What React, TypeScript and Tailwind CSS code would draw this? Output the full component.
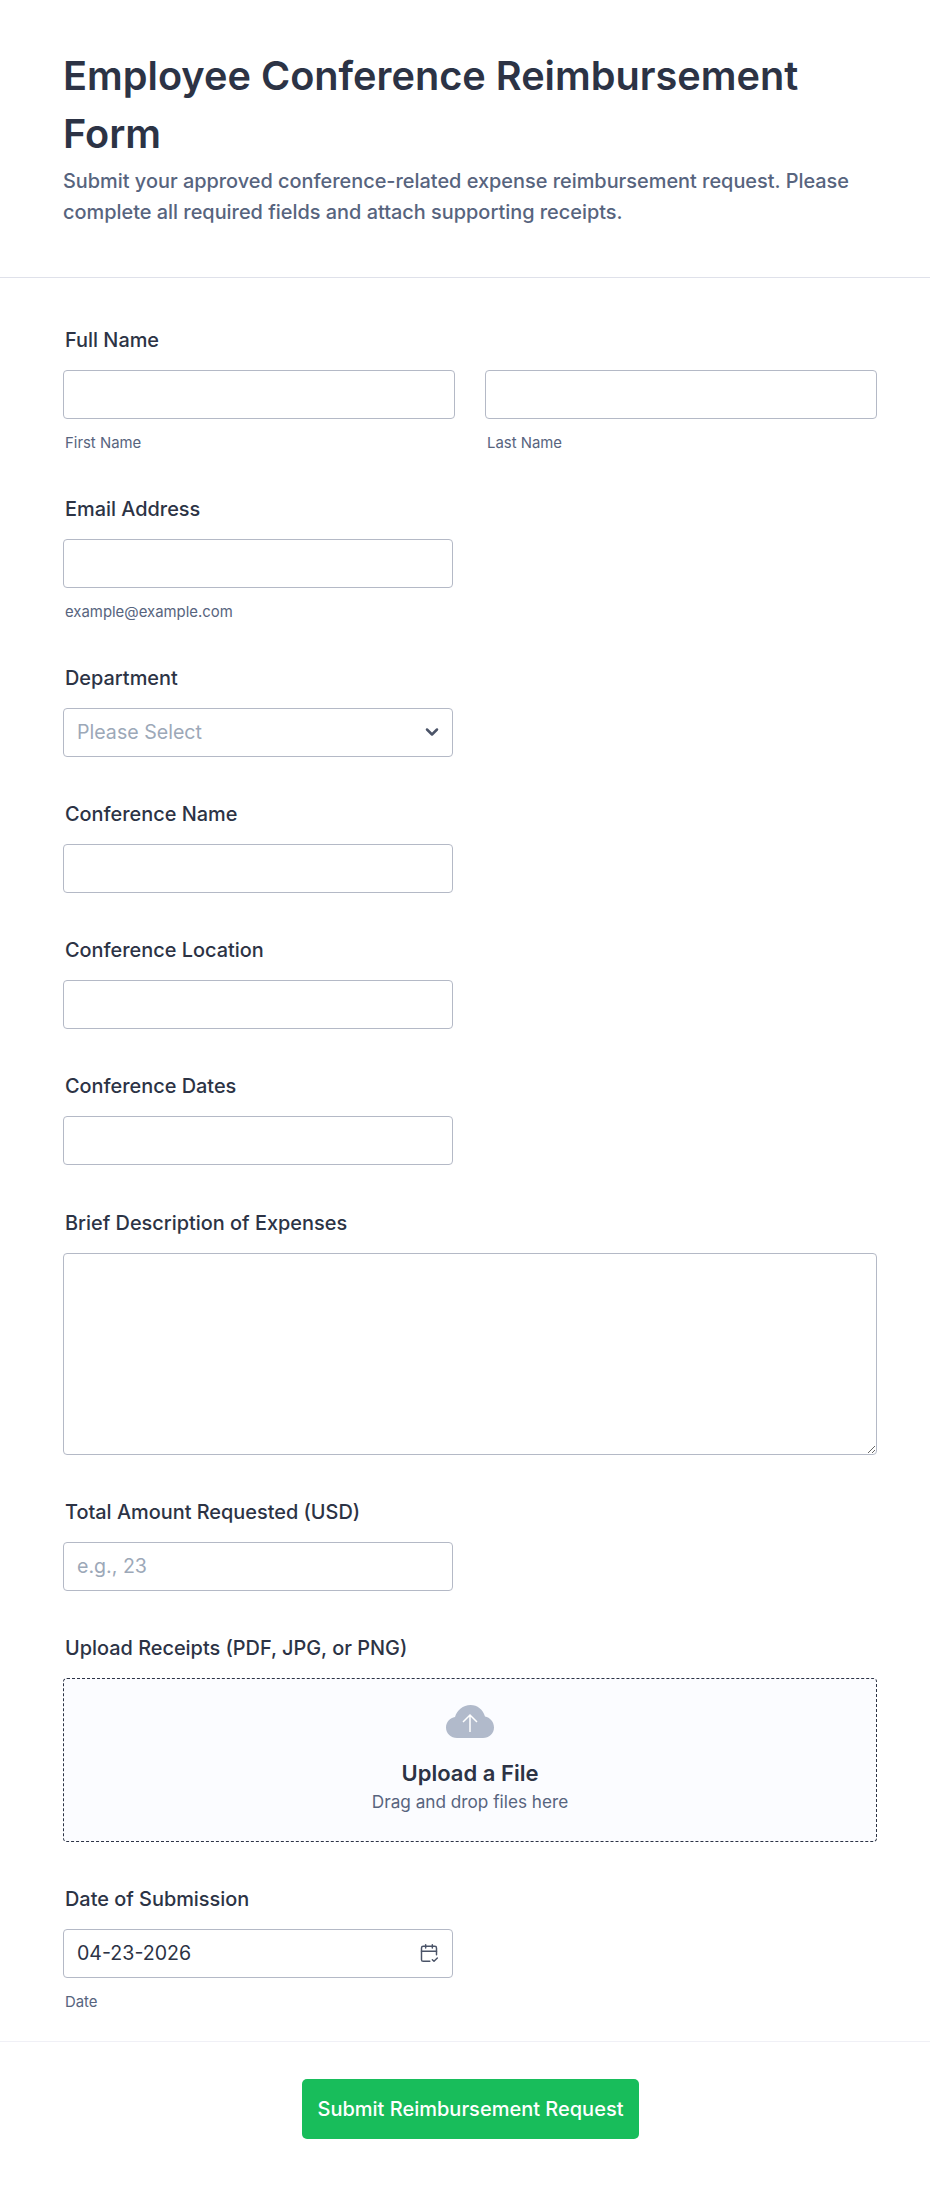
import { CalendarCheck2, ChevronDown } from "lucide-react";
import type { ReactNode } from "react";

const inputClass =
  "block h-[49px] w-full rounded-[4px] border border-[#b4b9c6] bg-white px-[13px] text-[19.6px] text-[#2c3345] placeholder:text-[#9ca8b8] outline-none";

const subClass = "mt-[16px] pl-[2px] text-[14.9px] leading-[17px] text-[#57647e]";

const Field = ({ label, sub, children }: { label: string; sub?: string; children: ReactNode }) => (
  <div>
    <label className="mb-[18px] block pl-[2px] text-[19.9px] font-medium leading-[24px] text-[#2c3345]">{label}</label>
    {children}
    {sub && <p className={subClass}>{sub}</p>}
  </div>
);

const Half = ({ children }: { children: ReactNode }) => <div className="w-[390px]">{children}</div>;

const App = () => {
  return (
    <div className="min-h-[2187px] bg-white font-['Inter',sans-serif]">
      <header className="border-b border-[#dfe1ea] px-[63px] pb-[49px] pt-[47px]">
        <h1 className="text-[39.700px] font-semibold leading-[58px] text-[#2c3345]">Employee Conference Reimbursement Form</h1>
        <p className="mt-[3px] text-[19.900px] font-medium leading-[31px] text-[#57647e]">
          Submit your approved conference-related expense reimbursement request. Please complete all required fields and
          attach supporting receipts.
        </p>
      </header>

      <form className="flex flex-col gap-[45.1px] pl-[63px] pr-[53px] pt-[50px]">
        <Field label="Full Name">
          <div className="grid grid-cols-2 gap-[30px]">
            <div>
              <input className={inputClass} />
              <p className={subClass}>First Name</p>
            </div>
            <div>
              <input className={inputClass} />
              <p className={subClass}>Last Name</p>
            </div>
          </div>
        </Field>

        <Half>
          <Field label="Email Address" sub="example@example.com">
            <input className={inputClass} />
          </Field>
        </Half>

        <Half>
          <Field label="Department">
            <div className="relative">
              <select className={`${inputClass} appearance-none !text-[#9ca8b8]`} defaultValue="">
                <option value="">Please Select</option>
              </select>
              <ChevronDown
                size={20}
                strokeWidth={3}
                className="absolute right-[11px] top-[14px] text-[#4b5468]"
              />
            </div>
          </Field>
        </Half>

        <Half>
          <Field label="Conference Name">
            <input className={inputClass} />
          </Field>
        </Half>

        <Half>
          <Field label="Conference Location">
            <input className={inputClass} />
          </Field>
        </Half>

        <Half>
          <Field label="Conference Dates">
            <input className={inputClass} />
          </Field>
        </Half>

        <Field label="Brief Description of Expenses">
          <textarea className="block h-[202px] w-full rounded-[4px] border border-[#b4b9c6] bg-white outline-none" />
        </Field>

        <Half>
          <Field label="Total Amount Requested (USD)">
            <input className={inputClass} placeholder="e.g., 23" />
          </Field>
        </Half>

        <Field label="Upload Receipts (PDF, JPG, or PNG)">
          <div className="flex h-[164px] flex-col items-center rounded-[4px] border border-dashed border-[#2c3345] bg-[#fbfcff] pt-[26px]">
            <svg width="48" height="33" viewBox="0 0 48 33">
              <path
                d="M11 33C5 33 0 28.500 0 22.500C0 17 4 12.800 9 12C11 5 17 0 24.500 0C31.500 0 37 4.500 39 11.500C44 12.500 48 17 48 22.500C48 28.500 43 33 37 33Z"
                fill="#b1bacb"
              />
              <path d="M24 27V10M17 17L24 10L31 17" fill="none" stroke="#fff" strokeWidth="1.500" />
            </svg>
            <p className="mt-[21px] text-[22px] font-semibold leading-[28px] text-[#2c3345]">Upload a File</p>
            <p className="mt-[3px] text-[17.200px] leading-[24px] text-[#57647e]">Drag and drop files here</p>
          </div>
        </Field>

        <Half>
          <Field label="Date of Submission" sub="Date">
            <div className="relative">
              <input className={inputClass} defaultValue="04-23-2026" />
              <CalendarCheck2 size={20} strokeWidth={1.750} className="absolute right-[14px] top-[14px] text-[#4b5468]" />
            </div>
          </Field>
        </Half>
      </form>

      <footer className="mt-[30px] flex justify-center border-t border-[#f0f0f6] pl-[11px] pt-[37px]">
        <button
          type="button"
          className="h-[60px] w-[337px] rounded-[5px] bg-[#18bd5b] text-[20px] font-medium text-white"
        >
          Submit Reimbursement Request
        </button>
      </footer>
    </div>
  );
};

export default App;
